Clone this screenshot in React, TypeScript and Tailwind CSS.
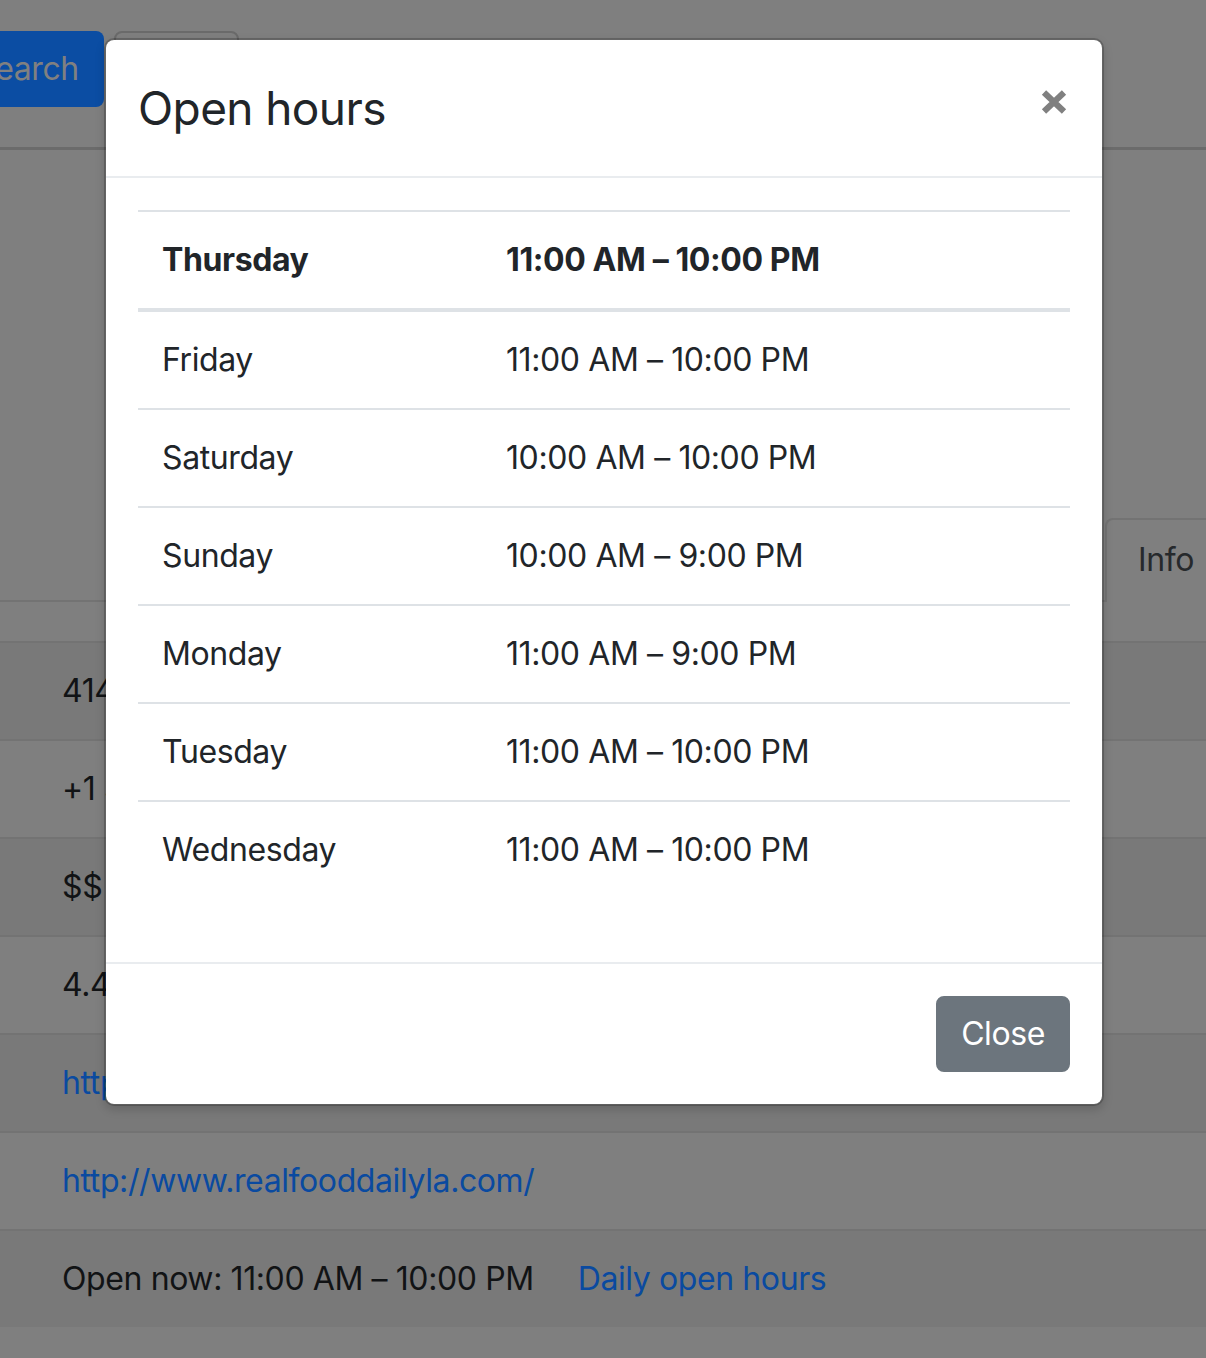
import React from "react";

const days: { day: string; hours: string }[] = [
  { day: "Friday", hours: "11:00 AM – 10:00 PM" },
  { day: "Saturday", hours: "10:00 AM – 10:00 PM" },
  { day: "Sunday", hours: "10:00 AM – 9:00 PM" },
  { day: "Monday", hours: "11:00 AM – 9:00 PM" },
  { day: "Tuesday", hours: "11:00 AM – 10:00 PM" },
  { day: "Wednesday", hours: "11:00 AM – 10:00 PM" },
];

function BgRow({ striped, children }: { striped?: boolean; children: React.ReactNode }) {
  return (
    <div
      className={
        "h-[98px] border-t-2 border-[#737373] flex items-center pl-[62px] whitespace-nowrap " +
        (striped ? "bg-[#797979]" : "bg-[#7f7f7f]")
      }
    >
      {children}
    </div>
  );
}

export default function App() {
  return (
    <div
      className="relative w-[1206px] h-[1358px] overflow-hidden bg-[#7f7f7f] text-[32px] leading-[48px] tracking-[-0.4px] text-[#111315]"
      style={{ fontFamily: "Inter, 'Noto Sans', sans-serif" }}
    >
      {/* Background page (dimmed by backdrop) */}
      <div className="h-[150px] border-b-[3px] border-[#6b6b6b] flex items-start pt-[31px]">
        <div className="-ml-[51px] h-[76px] pl-[26px] pr-[25px] rounded-[8px] bg-[#0b4da3] text-[#808080] flex items-center">
          Search
        </div>
        <div className="ml-[10px] w-[125px] h-[76px] rounded-[8px] border-2 border-[#6a6a6a]" />
      </div>
      <div className="h-[452px] flex items-end justify-end border-b-2 border-[#737373]">
        <div className="w-[101px] h-[84px] -mb-[2px] border-t-2 border-l-2 border-[#737373] rounded-tl-[8px] bg-[#7f7f7f] pl-[31px] pt-[16px] text-[#26292c]">
          Info
        </div>
      </div>
      <div className="h-[39px]" />
      <div>
        <BgRow striped>414 N La Cienega Blvd, Los Angeles, CA 90048, USA</BgRow>
        <BgRow>+1 310-289-9910</BgRow>
        <BgRow striped>$$</BgRow>
        <BgRow>4.4</BgRow>
        <BgRow striped>
          <span className="text-[#0a4aa0]">https://maps.google.com/?cid=1234567890</span>
        </BgRow>
        <BgRow>
          <span className="text-[#0a4aa0]">http://www.realfooddailyla.com/</span>
        </BgRow>
        <BgRow striped>
          <span>Open now: 11:00 AM – 10:00 PM</span>
          <span className="ml-[44px] text-[#0a4aa0]">Daily open hours</span>
        </BgRow>
      </div>

      {/* Modal */}
      <div className="absolute left-[104px] top-[38px] w-[1000px] rounded-[10px] border-2 border-black/20 bg-white bg-clip-padding text-[#212529] shadow-[0_4px_10px_rgba(0,0,0,0.15)]">
        <div className="h-[138px] border-b-2 border-[#e9ecef] px-[32px] py-[32px] flex items-start justify-between">
          <h5 className="text-[46px] leading-[72px] font-normal tracking-[-0.6px]">Open hours</h5>
          <button className="mt-[18px] mr-[3px] w-[26px] h-[24px]" aria-label="Close">
            <svg width="26" height="24" viewBox="0 0 26 24">
              <path d="M3 2.5 L23 21.5 M23 2.5 L3 21.5" stroke="#808080" strokeWidth="6.2" />
            </svg>
          </button>
        </div>
        <div className="p-[32px]">
          <div className="mb-[32px] border-t-2 border-[#dee2e6]">
            <div className="h-[100px] border-b-4 border-[#dee2e6] flex items-center font-bold">
              <div className="w-[344px] pl-[24px]">Thursday</div>
              <div className="pl-[24px]">11:00 AM – 10:00 PM</div>
            </div>
            {days.map((d, i) => (
              <div
                key={d.day}
                className={
                  "flex items-center " + (i === 0 ? "h-[96px]" : "h-[98px] border-t-2 border-[#dee2e6]")
                }
              >
                <div className="w-[344px] pl-[24px]">{d.day}</div>
                <div className="pl-[24px]">{d.hours}</div>
              </div>
            ))}
          </div>
        </div>
        <div className="border-t-2 border-[#e9ecef] p-[32px] flex justify-end">
          <button className="h-[76px] px-[23px] rounded-[8px] bg-[#6c757d] border-2 border-[#6c757d] text-white text-[32px] leading-[48px] tracking-[-0.4px]">
            Close
          </button>
        </div>
      </div>
    </div>
  );
}
